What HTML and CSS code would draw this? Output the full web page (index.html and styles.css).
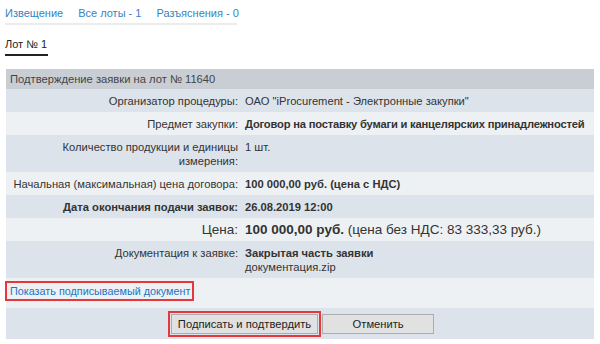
FILE: index.html
```html
<!DOCTYPE html>
<html lang="ru">
<head>
    <meta charset="UTF-8">
    <title>Подтверждение заявки</title>
    <link rel="stylesheet" href="styles.css">
</head>
<body>
    <div class="page">
        <div class="tabs">
            <a href="#" class="tab">Извещение</a>
            <a href="#" class="tab">Все лоты - 1</a>
            <a href="#" class="tab">Разъяснения - 0</a>
        </div>

        <div class="lot-tabs">
            <span class="lot-tab">Лот № 1</span>
        </div>

        <table class="form-table">
            <colgroup>
                <col class="col-label">
                <col class="col-value">
            </colgroup>
            <tr class="head">
                <td colspan="2">Подтверждение заявки на лот № 11640</td>
            </tr>
            <tr class="dark">
                <td class="label">Организатор процедуры:</td>
                <td class="value">ОАО "iProcurement - Электронные закупки"</td>
            </tr>
            <tr class="light">
                <td class="label">Предмет закупки:</td>
                <td class="value"><b class="tight">Договор на поставку бумаги и канцелярских принадлежностей</b></td>
            </tr>
            <tr class="dark">
                <td class="label">Количество продукции и единицы измерения:</td>
                <td class="value">1 шт.</td>
            </tr>
            <tr class="light">
                <td class="label">Начальная (максимальная) цена договора:</td>
                <td class="value"><b>100 000,00 руб. (цена с НДС)</b></td>
            </tr>
            <tr class="dark">
                <td class="label"><b>Дата окончания подачи заявок:</b></td>
                <td class="value"><b>26.08.2019 12:00</b></td>
            </tr>
            <tr class="light big">
                <td class="label">Цена:</td>
                <td class="value"><b>100 000,00 руб.</b> (цена без НДС: 83 333,33 руб.)</td>
            </tr>
            <tr class="dark">
                <td class="label">Документация к заявке:</td>
                <td class="value"><b>Закрытая часть заявки</b><br>документация.zip</td>
            </tr>
            <tr class="light link-row">
                <td colspan="2"><a href="#" class="doc-link mark">Показать подписываемый документ</a></td>
            </tr>
            <tr class="dark buttons-row">
                <td colspan="2">
                    <div class="buttons">
                        <span class="mark btn-mark"><button class="btn">Подписать и подтвердить</button></span>
                        <button class="btn btn-cancel">Отменить</button>
                    </div>
                </td>
            </tr>
        </table>
    </div>
</body>
</html>
```

FILE: styles.css
```css
* {
    margin: 0;
    padding: 0;
    box-sizing: border-box;
}

body {
    background-color: #fff;
    font-family: 'Liberation Sans', Arial, sans-serif;
    font-size: 11.2px;
    color: #333;
}

.page {
    padding: 6px 5px 0 5px;
}

.tabs {
    display: flex;
    gap: 15px;
    width: 232px;
    height: 19px;
    border-bottom: 2px solid #ececec;
    font-size: 11px;
    line-height: 14px;
    white-space: nowrap;
}

.tab {
    color: #3483c3;
    text-decoration: none;
}

.lot-tabs {
    display: flex;
    padding-top: 12px;
    height: 31px;
}

.lot-tab {
    height: 19px;
    line-height: 14px;
    border-bottom: 2px solid #222;
    color: #222;
    font-size: 11px;
    padding-right: 1px;
}

.form-table {
    margin-top: 13px;
    margin-left: 1px;
    width: 588px;
    table-layout: fixed;
    border-collapse: collapse;
    line-height: 14px;
}

.col-label {
    width: 239px;
}

.form-table td {
    padding: 5px 4px 4px 4px;
    vertical-align: top;
}

.head td {
    background-color: #c9ced4;
    padding: 3px 4px 3px 4px;
    color: #444;
}

.dark td {
    background-color: #dde3ea;
}

.light td {
    background-color: #eef1f4;
}

.form-table td.label {
    text-align: right;
    padding-right: 7px;
}

.form-table td.value {
    padding-left: 0;
    padding-right: 0;
    white-space: nowrap;
}

.tight {
    letter-spacing: -0.2px;
}

.big td {
    font-size: 13.5px;
}

.mark {
    display: inline-block;
    border: 2px solid #e6373d;
}

.form-table .link-row td {
    padding: 3px 0 7px 0;
}

.doc-link {
    margin-left: -1px;
    font-size: 10.8px;
    color: #2273c4;
    text-decoration: none;
    padding: 1px 2px 1px 3px;
}

.form-table .buttons-row td {
    padding: 3px 0 2px 0;
}

.buttons {
    display: flex;
    justify-content: center;
    align-items: center;
    gap: 1px;
    margin-left: 2px;
}

.btn-mark {
    padding: 1px;
}

.btn {
    font-family: 'Liberation Sans', Arial, sans-serif;
    font-size: 11.2px;
    color: #222;
    background-color: #e1e1e1;
    border: 1px solid #adadad;
    height: 20px;
    padding: 0 6px;
}

.btn-cancel {
    width: 112px;
}
```
